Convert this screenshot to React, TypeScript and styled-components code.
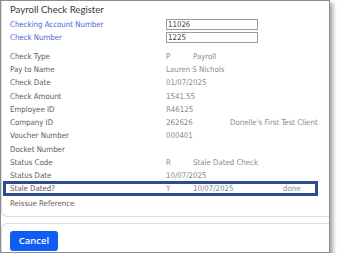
import React from "react";
import styled, { createGlobalStyle } from "styled-components";

const Global = createGlobalStyle`
  html, body { margin: 0; padding: 0; background: #ffffff; }
  * { box-sizing: border-box; }
`;

const Dialog = styled.div`
  width: 330px;
  height: 253px;
  border: 1px solid #8c8c8c;
  box-shadow: 3px 3px 4px rgba(0, 0, 0, 0.35);
  background: #fff;
  overflow: hidden;
  display: flex;
  flex-direction: column;
`;

const Body = styled.div`
  margin-right: -6px;
  height: 216px;
  border: 1px solid #dcdcdc;
  border-top: none;
  border-radius: 0 0 6px 6px;
  padding: 0 0 0 8px;
  display: flex;
  flex-direction: column;
  font-family: "DejaVu Sans Condensed", "Liberation Sans", sans-serif;
  font-size: 7.8px;
`;

const Title = styled.div`
  font-family: Lato, "Open Sans", sans-serif;
  font-size: 9.6px;
  line-height: 13px;
  color: #3a3a3a;
  margin-top: 2px;
  height: 14.5px;
`;

const Row = styled.div<{ $h?: number }>`
  display: flex;
  align-items: center;
  height: ${(p) => p.$h ?? 13.3}px;
`;

const Label = styled.div<{ $link?: boolean }>`
  width: 156px;
  flex: none;
  color: ${(p) => (p.$link ? "#4a63db" : "#5a5a5a")};
  white-space: nowrap;
`;

const Value = styled.div<{ $w?: number }>`
  ${(p) => (p.$w ? `width: ${p.$w}px; flex: none;` : "")}
  color: #868a93;
  white-space: nowrap;
`;

const Input = styled.div`
  width: 92px;
  height: 11px;
  border: 1px solid #9a9a9a;
  padding-left: 1px;
  display: flex;
  align-items: center;
  color: #4a4a4a;
`;

const Spacer = styled.div<{ $h: number }>`
  height: ${(p) => p.$h}px;
  flex: none;
`;

const Highlight = styled.div`
  display: flex;
  align-items: center;
  height: 15px;
  margin: -1px 0 0 -7px;
  width: 315px;
  border: 3px solid #2e4a92;
  padding-left: 4px;
`;

const Footer = styled.div`
  margin-top: 6px;
  margin-right: -6px;
  flex: 1;
  border-top: 1px solid #dcdcdc;
  border-left: 1px solid #dcdcdc;
  border-radius: 6px 0 0 0;
  padding: 6px 0 0 8px;
`;

const Button = styled.button`
  width: 48px;
  height: 20px;
  border: none;
  border-radius: 3px;
  background: #0e5ef6;
  color: #fff;
  font-family: "Open Sans", "Noto Sans", sans-serif;
  font-weight: 600;
  font-size: 9.5px;
  padding: 0;
`;

type Field = { label: string; values: { text: string; w?: number }[] };

const fields: Field[] = [
  { label: "Check Type", values: [{ text: "P", w: 27 }, { text: "Payroll" }] },
  { label: "Pay to Name", values: [{ text: "Lauren S Nichols" }] },
  { label: "Check Date", values: [{ text: "01/07/2025" }] },
  { label: "Check Amount", values: [{ text: "1541.55" }] },
  { label: "Employee ID", values: [{ text: "R46125" }] },
  { label: "Company ID", values: [{ text: "262626", w: 64 }, { text: "Donelle's First Test Client" }] },
  { label: "Voucher Number", values: [{ text: "000401" }] },
  { label: "Docket Number", values: [] },
  { label: "Status Code", values: [{ text: "R", w: 27 }, { text: "Stale Dated Check" }] },
  { label: "Status Date", values: [{ text: "10/07/2025" }] },
];

export default function App() {
  return (
    <>
      <Global />
      <Dialog>
        <Body>
          <Title>Payroll Check Register</Title>
          <Row $h={13}>
            <Label $link>Checking Account Number</Label>
            <Input>11026</Input>
          </Row>
          <Row $h={13}>
            <Label $link>Check Number</Label>
            <Input>1225</Input>
          </Row>
          <Spacer $h={6} />
          {fields.map((f) => (
            <Row key={f.label}>
              <Label>{f.label}</Label>
              {f.values.map((v, i) => (
                <Value key={i} $w={v.w}>
                  {v.text}
                </Value>
              ))}
            </Row>
          ))}
          <Highlight>
            <Label>Stale Dated?</Label>
            <Value $w={27}>Y</Value>
            <Value $w={90}>10/07/2025</Value>
            <Value>done</Value>
          </Highlight>
          <Row>
            <Label>Reissue Reference</Label>
          </Row>
        </Body>
        <Footer>
          <Button>Cancel</Button>
        </Footer>
      </Dialog>
    </>
  );
}
